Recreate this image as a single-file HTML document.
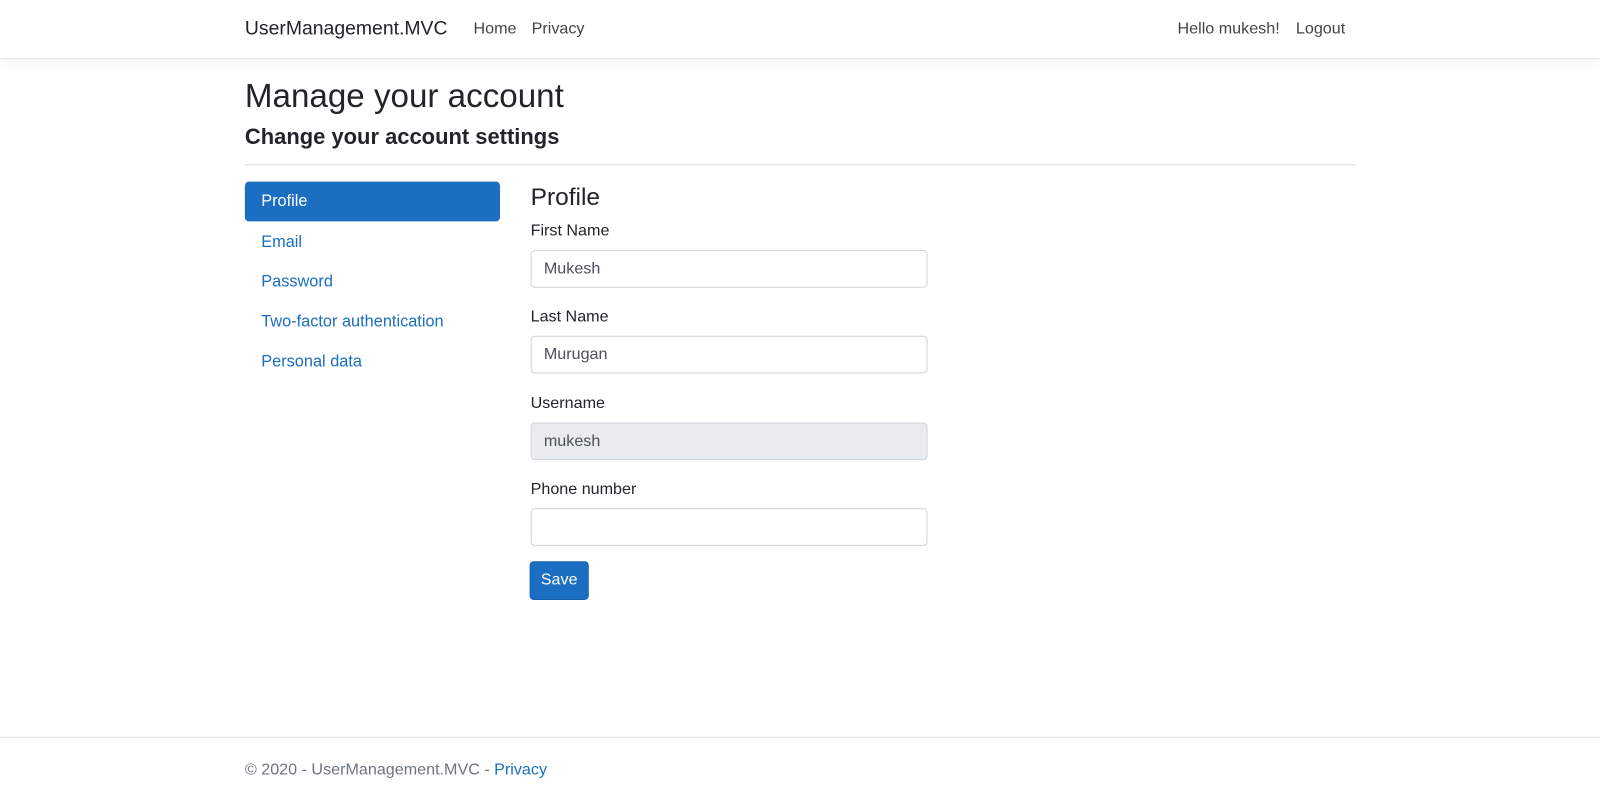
<!DOCTYPE html>
<html><head><style>
body{margin:0;font-family:"Liberation Sans",sans-serif;color:#212529;background:#fff;width:1600px;height:799px;position:relative;overflow:hidden}
#w{position:absolute;left:0;top:0;width:1568px;height:783px;transform:scale(1.0204);transform-origin:0 0}
.nav{position:absolute;top:0;left:0;right:0;height:57px;border-bottom:1px solid #e5e5e5;box-shadow:0 4px 10px rgba(0,0,0,.04)}
.a{position:absolute;white-space:nowrap}
.brand{left:240px;top:18px;font-size:19px;color:#212529}
.nl{top:20px;font-size:15.8px;color:#444}
h1{position:absolute;left:240px;top:76px;margin:0;font-size:32.5px;font-weight:500}
h4{position:absolute;left:240px;top:122px;margin:0;font-size:21.5px;font-weight:bold}
.hr{position:absolute;left:240px;width:1089px;top:161px;border-top:1px solid #ddd}
.pill{position:absolute;left:240px;top:178px;width:250px;height:39px;background:#1b6ec2;border-radius:4px}
.lk{left:256px;font-size:16px;color:#1b6ec2}
.lbl{left:520px;font-size:15.8px;color:#212529}
.inp{position:absolute;left:520px;width:387px;height:35px;border:1px solid #ced4da;border-radius:4px;background:#fff}
.inp span{position:absolute;left:12px;top:9px;font-size:15.8px;color:#495057}
.btn{position:absolute;left:519px;top:550px;width:56px;height:36px;background:#1b6ec2;border:1px solid #1861ac;border-radius:4px;color:#fff;font-size:15.8px;text-align:center;line-height:36px}
.foot{position:absolute;left:0;right:0;top:722px;border-top:1px solid #e5e5e5}
</style></head><body><div id="w">
<div class="nav"></div>
<div class="a brand">UserManagement.MVC</div>
<div class="a nl" style="left:464px">Home</div>
<div class="a nl" style="left:521px">Privacy</div>
<div class="a nl" style="left:1154px">Hello mukesh!</div>
<div class="a nl" style="left:1270px">Logout</div>
<h1>Manage your account</h1>
<h4>Change your account settings</h4>
<div class="hr"></div>
<div class="pill"></div>
<div class="a lk" style="top:189px;color:#fff">Profile</div>
<div class="a lk" style="top:229px">Email</div>
<div class="a lk" style="top:268px">Password</div>
<div class="a lk" style="top:307px">Two-factor authentication</div>
<div class="a lk" style="top:346px">Personal data</div>
<div class="a" style="left:520px;top:180px;font-size:24px;font-weight:500">Profile</div>
<div class="a lbl" style="top:218px">First Name</div>
<div class="inp" style="top:245px"><span>Mukesh</span></div>
<div class="a lbl" style="top:302px">Last Name</div>
<div class="inp" style="top:329px"><span>Murugan</span></div>
<div class="a lbl" style="top:387px">Username</div>
<div class="inp" style="top:414px;background:#e9ecef"><span>mukesh</span></div>
<div class="a lbl" style="top:471px">Phone number</div>
<div class="inp" style="top:498px"></div>
<div class="btn">Save</div>
<div class="foot"></div>
<div class="a" style="left:240px;top:746px;font-size:15.8px;color:#6c757d">© 2020 - UserManagement.MVC - <span style="color:#1b6ec2">Privacy</span></div>
</div></body></html>
